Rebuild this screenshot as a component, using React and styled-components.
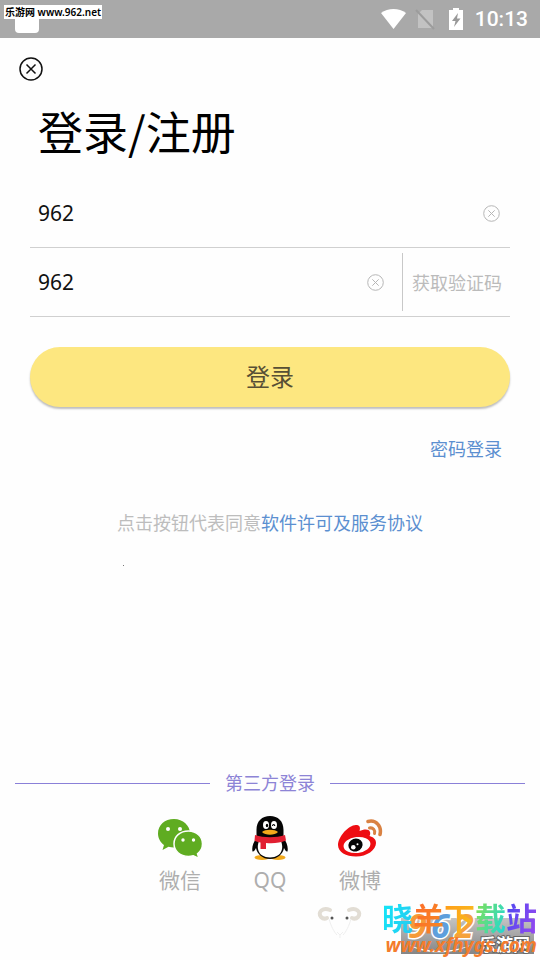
import React, { useState } from 'react';
import styled, { createGlobalStyle } from 'styled-components';

const GlobalStyle = createGlobalStyle`
  * {
    box-sizing: border-box;
  }

  body {
    margin: 0;
    background: #fefefe;
    font-family: "Noto Sans", "Noto Sans CJK SC", sans-serif;
  }

  button, input {
    font-family: inherit;
  }
`;

const Page = styled.div`
  position: relative;
  display: flex;
  flex-direction: column;
  min-height: 100vh;
  overflow: hidden;
`;

const StatusBar = styled.div`
  display: flex;
  align-items: center;
  justify-content: flex-end;
  height: 38px;
  padding-right: 12px;
  background: #a9a9a9;
`;

const StatusIcons = styled.svg`
  display: block;
  margin-right: 11px;
`;

const Clock = styled.span`
  color: #fff;
  font-family: Roboto, sans-serif;
  font-size: 21px;
  font-weight: 500;
  line-height: 24px;
`;

const Notification = styled.div`
  position: absolute;
  top: 14px;
  left: 15px;
  width: 24px;
  height: 19px;
  border-radius: 4px;
  background: #fff;
`;

const SiteTag = styled.div`
  position: absolute;
  top: 5px;
  left: 4px;
  width: 98px;
  padding-left: 1px;
  background: #fff;
  color: #000;
  font-size: 10px;
  font-weight: 600;
  line-height: 14px;
  white-space: nowrap;
`;

const IconButton = styled.button`
  display: flex;
  flex: none;
  padding: 0;
  border: none;
  background: none;
  color: ${(props) => props.$color};
  cursor: pointer;
`;

const Header = styled.header`
  padding: 19px 19px 0;
`;

const Title = styled.h1`
  margin: 16px 19px 0;
  color: #000;
  font-family: "Noto Sans CJK SC", sans-serif;
  font-size: 45px;
  font-weight: 400;
  line-height: 68px;
`;

const Form = styled.form`
  display: flex;
  flex-direction: column;
  padding: 14px 30px 0;
`;

const Field = styled.div`
  display: flex;
  align-items: center;
  height: 69px;
  padding: 0 8px;
  border-bottom: 1px solid #d0d0d0;
`;

const Input = styled.input`
  flex: 1;
  min-width: 0;
  padding: 0;
  border: none;
  outline: none;
  background: none;
  color: #111;
  font-size: 21px;
  line-height: 30px;
`;

const ClearSlot = styled.div`
  margin-right: ${(props) => (props.$wide ? 18 : 2)}px;
`;

const CodeButton = styled.button`
  height: 58px;
  padding: 0 0 0 9px;
  border: none;
  border-left: 1px solid #c8c8c8;
  background: none;
  color: #bbb;
  font-size: 18px;
  cursor: pointer;
`;

const SubmitButton = styled.button`
  height: 60px;
  margin-top: 30px;
  padding: 0;
  border: none;
  border-radius: 30px;
  background: #fde780;
  box-shadow: 0 2px 2px rgba(0, 0, 0, 0.25);
  color: #574f35;
  font-size: 24px;
  font-weight: 400;
  line-height: 36px;
  cursor: pointer;
`;

const Link = styled.a`
  color: #5b8fd0;
  font-size: 18px;
  line-height: 26px;
  text-decoration: none;
`;

const PasswordLink = styled(Link)`
  align-self: flex-end;
  margin: 29px 8px 0;
`;

const Agreement = styled.p`
  margin: 48px 0 0;
  color: #bdbdbd;
  font-size: 18px;
  line-height: 26px;
  text-align: center;
`;

const Speck = styled.span`
  width: 1px;
  height: 1px;
  margin: 29px 0 0 123px;
  background: #777;
`;

const ThirdParty = styled.section`
  margin-top: auto;
  padding: 0 15px 62px;
`;

const Divider = styled.h2`
  display: flex;
  align-items: center;
  gap: 15px;
  margin: 0;
  color: #8d84d6;
  font-size: 18px;
  font-weight: 400;
  line-height: 26px;

  &::before, &::after {
    content: '';
    flex: 1;
    height: 1px;
    background: #8a80d8;
  }
`;

const Providers = styled.div`
  display: flex;
  justify-content: center;
  margin-top: 18px;
`;

const Provider = styled.button`
  display: flex;
  flex-direction: column;
  align-items: center;
  width: 90px;
  padding: 0;
  border: none;
  background: none;
  color: #aeaeae;
  font-size: 21px;
  line-height: 36px;
  cursor: pointer;
`;

const Watermark = styled.div`
  position: absolute;
  right: 0;
  bottom: 0;
  width: 230px;
  height: 60px;
  pointer-events: none;
`;

const WatermarkArt = styled.svg`
  position: absolute;
  inset: 0;
`;

const SiteName = styled.div`
  position: absolute;
  top: -2px;
  right: 3px;
  display: flex;
  font-size: 31px;
  font-weight: 700;
  line-height: 40px;
`;

const Glyph = styled.span`
  background: linear-gradient(110deg, ${(props) => props.$from}, ${(props) => props.$to});
  background-clip: text;
  -webkit-background-clip: text;
  color: transparent;
`;

const SiteUrl = styled.div`
  position: absolute;
  right: 3px;
  bottom: 3px;
  color: #f47c2c;
  font-size: 19px;
  font-style: italic;
  font-weight: 700;
  line-height: 24px;
`;

const glyphs = [
  { char: '晓', from: '#12e8f8', to: '#28c8f0' },
  { char: '羊', from: '#ff6a2c', to: '#f58a20' },
  { char: '下', from: '#ff9a18', to: '#f8c020' },
  { char: '载', from: '#8be04a', to: '#18d8e0' },
  { char: '站', from: '#4a48f0', to: '#9a48f0' },
];

function CircleX({ size, stroke }) {
  return (
    <svg width={size} height={size} viewBox="0 0 24 24" fill="none" stroke="currentColor" strokeWidth={stroke}>
      <circle cx="12" cy="12" r="11" />
      <path d="M7.5 7.5l9 9M16.5 7.5l-9 9" />
    </svg>
  );
}

function WechatIcon() {
  return (
    <svg width="46" height="48" viewBox="0 0 46 48">
      <g fill="#5fac21">
        <path d="M17 5C7.800 5 1 11 1 19.500c0 4.700 2.400 8.800 6 11.500L5.500 36l6-3.200c1.800.5 3.600.8 5.500.8 9 0 16-5.800 16-14S26 5 17 5z" />
        <path d="M31.500 17c-8.500 0-14.500 5.500-14.500 12.700s6 12.700 14.500 12.700c1.700 0 3.300-.3 4.800-.7L42 44.500l-1.500-4.700c3.200-2.300 5-5.800 5-10 0-7.200-6-12.800-14-12.800z" stroke="#fefefe" strokeWidth="1.500" />
      </g>
      <g fill="#fefefe">
        <circle cx="11" cy="15" r="2" />
        <circle cx="23" cy="15" r="2" />
        <circle cx="26" cy="26" r="1.700" />
        <circle cx="36.500" cy="26" r="1.700" />
      </g>
    </svg>
  );
}

function QQIcon() {
  return (
    <svg width="46" height="48" viewBox="0 0 46 48">
      <ellipse cx="15" cy="43.500" rx="7.500" ry="2.500" fill="#f2a91c" />
      <ellipse cx="31" cy="43.500" rx="7.500" ry="2.500" fill="#f2a91c" />
      <path d="M9.500 24c-3 4-5 9-4 13.500 1.300.5 2.500-1.500 3.500-3.500 1 6 6.500 11 14 11s13-5 14-11c1 2 2.200 4 3.500 3.500 1-4.500-1-9.500-4-13.500V16C36.500 7 31 2 23 2S9.500 7 9.500 16z" fill="#050505" />
      <path d="M12 27h22c2.500 6 2 16-11 16.500C10 43 9.500 33 12 27z" fill="#fff" />
      <path d="M8 21c9 3 21 3 30 0l1 5.500c-6 2.500-13 3.300-20 2.500V35h-5.500v-6.500c-2.500-.4-4.500-1-6-1.800z" fill="#e11f32" />
      <ellipse cx="19" cy="11" rx="3" ry="4" fill="#fff" />
      <ellipse cx="27" cy="11" rx="3" ry="4" fill="#fff" />
      <ellipse cx="20" cy="11.500" rx="1.200" ry="1.800" />
      <path d="M25.500 12c.3-2 2-2 2.300 0" fill="none" stroke="#000" strokeWidth="1.200" />
      <path d="M15 18c3-3 13-3 16 0-3 3.500-13 3.500-16 0z" fill="#f3a81b" />
    </svg>
  );
}

function WeiboIcon() {
  return (
    <svg width="46" height="48" viewBox="0 0 46 48">
      <path d="M20 11c3 .5 3.500 3 2.500 6 4-1.800 9.500-2.500 10.500 1 .5 1.500 0 3-.5 4 3.500 1 6.500 3 6.500 7 0 7-9 13.500-20 13.500C9 42.500 1 38 1 31 1 22 13 9.500 20 11z" fill="#ee0d12" />
      <ellipse cx="20" cy="31" rx="13.500" ry="8" transform="rotate(-7 20 31)" fill="#fefefe" />
      <ellipse cx="18.500" cy="31" rx="7.200" ry="6.500" transform="rotate(-20 18.500 31)" fill="#050505" />
      <circle cx="16.300" cy="33.300" r="2.300" fill="#fff" />
      <circle cx="20.500" cy="30.300" r="1" fill="#fff" />
      <path d="M31 7.500c8-2 14 4.500 12 13" fill="none" stroke="#d98243" strokeWidth="3.500" strokeLinecap="round" />
      <path d="M32.500 14c3.500-.7 6 2 5 5.500" fill="none" stroke="#d98243" strokeWidth="3" strokeLinecap="round" />
    </svg>
  );
}

const providers = [
  { name: '微信', Icon: WechatIcon },
  { name: 'QQ', Icon: QQIcon },
  { name: '微博', Icon: WeiboIcon },
];

export default function App() {
  const [phone, setPhone] = useState('962');
  const [code, setCode] = useState('962');

  return (
    <Page>
      <GlobalStyle />
      <StatusBar>
        <StatusIcons width="84" height="24" viewBox="0 0 84 24">
          <path d="M1 6C8 .500 19 .500 26 6L13.500 22z" fill="#fff" />
          <path d="M42 3h11v18H38V7z" fill="#c2c2c2" />
          <path d="M36 3l18 19" stroke="#9c9c9c" strokeWidth="2" />
          <path d="M73 1h6v2h4v20H69V3h4z" fill="#fff" />
          <path d="M78 6l-6 8h3.500L74 20l6.500-8.500H77z" fill="#999" />
        </StatusIcons>
        <Clock>10:13</Clock>
      </StatusBar>
      <Notification />
      <SiteTag>乐游网 www.962.net</SiteTag>

      <Header>
        <IconButton type="button" aria-label="关闭" $color="#111">
          <CircleX size={24} stroke={1.5} />
        </IconButton>
        <Title>登录/注册</Title>
      </Header>

      <Form onSubmit={(e) => e.preventDefault()}>
        <Field>
          <Input aria-label="手机号" value={phone} onChange={(e) => setPhone(e.target.value)} />
          <ClearSlot>
            <IconButton type="button" aria-label="清除" $color="#b5b5b5" onClick={() => setPhone('')}>
              <CircleX size={17} stroke={1.4} />
            </IconButton>
          </ClearSlot>
        </Field>
        <Field>
          <Input aria-label="验证码" value={code} onChange={(e) => setCode(e.target.value)} />
          <ClearSlot $wide>
            <IconButton type="button" aria-label="清除" $color="#b5b5b5" onClick={() => setCode('')}>
              <CircleX size={17} stroke={1.4} />
            </IconButton>
          </ClearSlot>
          <CodeButton type="button">获取验证码</CodeButton>
        </Field>
        <SubmitButton type="submit">登录</SubmitButton>
        <PasswordLink href="#password">密码登录</PasswordLink>
      </Form>

      <Agreement>
        点击按钮代表同意<Link href="#terms">软件许可及服务协议</Link>
      </Agreement>
      <Speck />

      <ThirdParty>
        <Divider>第三方登录</Divider>
        <Providers>
          {providers.map(({ name, Icon }) => (
            <Provider key={name} type="button">
              <Icon />
              {name}
            </Provider>
          ))}
        </Providers>
      </ThirdParty>

      <Watermark>
        <WatermarkArt width="230" height="60" viewBox="0 0 230 60">
          <defs>
            <linearGradient id="plate" x1="0" y1="0" x2="0" y2="1">
              <stop offset="0" stopColor="#c4c4c4" />
              <stop offset="1" stopColor="#858585" />
            </linearGradient>
          </defs>
          <g fill="none" stroke="#e2ddd4" strokeWidth="4" strokeLinecap="round">
            <path d="M20 10c-7-3-13 2-9 7 2 2 4 2 6 1" />
            <path d="M39 10c7-3 13 2 9 7-2 2-4 2-6 1" />
          </g>
          <path d="M19 19c2 7 5 13 8 16M33 35c3-3 6-9 8-16M27 32l3 3 3-3M30 35v3" fill="none" stroke="#efefef" />
          <circle cx="22" cy="18" r="1.500" fill="#555" />
          <circle cx="37" cy="18" r="1.500" fill="#555" />
          <rect x="91" y="18" width="133" height="36" fill="url(#plate)" />
          <path d="M99 45c20 8 46 8 66-2-18 11-48 13-66 2z" fill="#fff" />
          <g fontWeight="700" fontStyle="italic" fontSize="34" stroke="#fff" strokeWidth="3" paintOrder="stroke">
            <text x="98" y="38" fill="#f59a38">9</text>
            <text x="121" y="38" fill="#5e9fdc">6</text>
            <text x="145" y="38" fill="#f5a23c">2</text>
          </g>
          <text x="169" y="51" fontSize="17" fontWeight="700" fill="#fff" stroke="#666" strokeWidth="2" paintOrder="stroke">乐游网</text>
        </WatermarkArt>
        <SiteName>
          {glyphs.map(({ char, from, to }) => (
            <Glyph key={char} $from={from} $to={to}>{char}</Glyph>
          ))}
        </SiteName>
        <SiteUrl>www.xfhygs.com</SiteUrl>
      </Watermark>
    </Page>
  );
}
